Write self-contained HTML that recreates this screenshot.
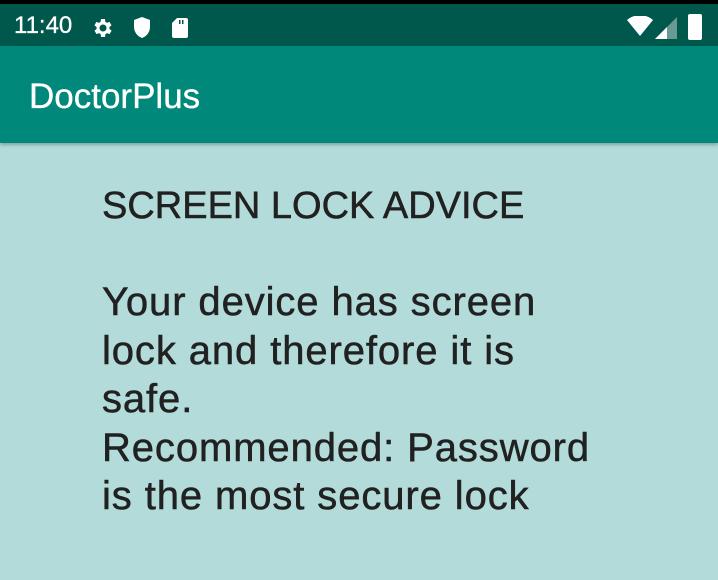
<!DOCTYPE html>
<html><head><style>
body{margin:0;width:718px;height:580px;overflow:hidden;background:#B2DBDA;font-family:"Liberation Sans",sans-serif;}
.sb{position:absolute;left:0;top:0;width:718px;height:46px;background:#00574B;border-top:4px solid #000;box-sizing:border-box;color:#fff}
.ab{position:absolute;left:0;top:46px;width:718px;height:97px;background:#00887A;box-shadow:0 2px 3px rgba(0,0,0,.25)}
.ab span{position:absolute;left:29px;top:31px;font-size:35px;color:#fff;-webkit-text-stroke:0.3px #fff}
.txt{position:absolute;left:102px;top:182px;width:600px;font-size:38px;line-height:48.5px;color:#212121;-webkit-text-stroke:0.5px #212121;white-space:nowrap}
.b{display:block;position:absolute;left:0;top:96px;font-size:40px;line-height:48.5px;letter-spacing:0.9px}
</style></head><body>
<div class="sb">
<span style="position:absolute;left:14px;top:8px;font-size:24px;-webkit-text-stroke:0.3px #fff">11:40</span>
<svg style="position:absolute;left:90px;top:12px" width="24" height="24" viewBox="0 0 24 24"><path fill="#fff" d="M19.4 13a7.5 7.5 0 000-2l2.1-1.6-2-3.5-2.5 1a7.5 7.5 0 00-1.7-1L15 3h-4l-.4 2.9a7.5 7.5 0 00-1.7 1l-2.5-1-2 3.5L6.6 11a7.5 7.5 0 000 2l-2.1 1.6 2 3.5 2.5-1a7.5 7.5 0 001.7 1L11 21h4l.4-2.9a7.5 7.5 0 001.7-1l2.5 1 2-3.5zM13 15.5a3.5 3.5 0 110-7 3.5 3.5 0 010 7z"/></svg>
<svg style="position:absolute;left:132px;top:12px" width="20" height="24" viewBox="0 0 20 24"><path fill="#fff" d="M10 1L2 4v7c0 5 3.5 9.5 8 11 4.5-1.5 8-6 8-11V4z"/></svg>
<svg style="position:absolute;left:170px;top:12px" width="20" height="24" viewBox="0 0 20 24"><path fill="#fff" d="M7 2h9a2 2 0 012 2v16a2 2 0 01-2 2H4a2 2 0 01-2-2V7zM9 4v4h1.5V4zm3 0v4h1.5V4z"/></svg>
<svg style="position:absolute;left:627px;top:12px" width="26" height="22" viewBox="0 0 26 22"><path fill="#fff" d="M0 4a20 20 0 0126 0L13 20z"/></svg>
<svg style="position:absolute;left:655px;top:13px" width="22" height="22" viewBox="0 0 22 22"><path fill="#fff" fill-opacity=".4" d="M22 0v22H0z"/><path fill="#fff" d="M12 10v12H0z"/></svg>
<div style="position:absolute;left:688px;top:10px;width:14px;height:26px;background:#fff;border-radius:2px"></div>
</div>
<div class="ab"><span>DoctorPlus</span></div>
<div class="txt">SCREEN LOCK ADVICE<span class="b">Your device has screen<br>lock and therefore it is<br>safe.<br>Recommended: Password<br>is the most secure lock</span></div>
</body></html>
